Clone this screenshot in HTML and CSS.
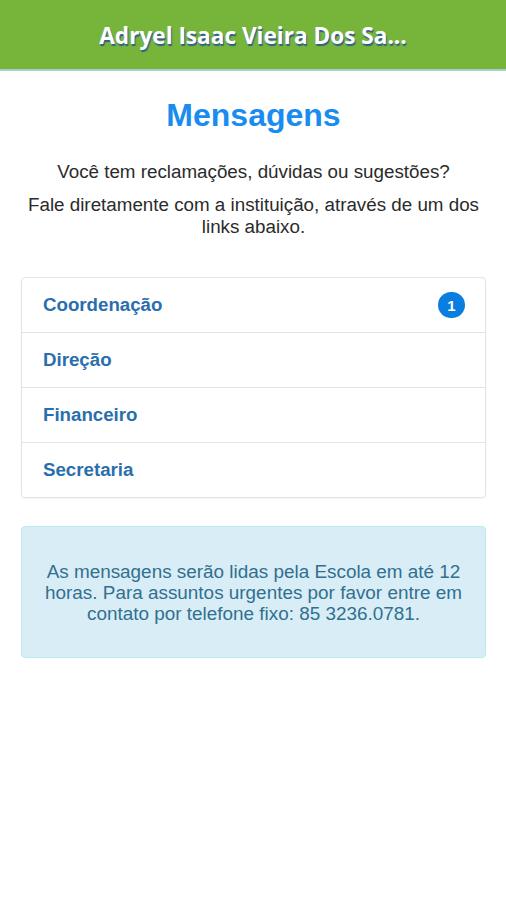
FILE: index.html
```html
<!DOCTYPE html>
<html>
<head>
    <title>Mensagens</title>
    <link rel="stylesheet" href="styles.css">
</head>
<body>
    <div class="top-bar">
        <div class="top-title">Adryel Isaac Vieira Dos Sa...</div>
    </div>
    <div class="content">
        <h1>Mensagens</h1>
        <p class="intro">Você tem reclamações, dúvidas ou sugestões?</p>
        <p class="intro">Fale diretamente com a instituição, através de um dos links abaixo.</p>
        <div class="list-group">
            <a class="list-item" href="#">Coordenação <span class="badge">1</span></a>
            <a class="list-item" href="#">Direção</a>
            <a class="list-item" href="#">Financeiro</a>
            <a class="list-item" href="#">Secretaria</a>
        </div>
        <div class="alert-info">
            As mensagens serão lidas pela Escola em até 12 horas. Para assuntos urgentes por favor entre em contato por telefone fixo: 85 3236.0781.
        </div>
    </div>
</body>
</html>
```

FILE: styles.css
```css
body {
    margin: 0;
    font-family: "Liberation Sans", Arial, sans-serif;
    background-color: #fff;
    color: #2b2b2b;
}
.top-bar {
    height: 69px;
    background-color: #76b53a;
    border-bottom: 2px solid #a9cfc8;
    display: flex;
    align-items: center;
    justify-content: center;
}
.top-title {
    color: #fff;
    font-family: "Open Sans", sans-serif;
    font-weight: bold;
    font-size: 22.6px;
    text-shadow: 1px 2px 1px #2f5d8a;
    white-space: nowrap;
    padding-top: 1px;
}
.content {
    padding: 0 20px 0 21px;
}
h1 {
    color: #1a8cf0;
    font-size: 32px;
    font-weight: bold;
    text-align: center;
    margin: 26px 0 27px;
}
.intro {
    font-size: 18.8px;
    line-height: 22px;
    text-align: center;
    margin: 0 0 11px;
}
.list-group {
    margin-top: 39px;
    border: 1px solid #e4e4e4;
    border-radius: 4px;
    box-shadow: 0 1px 2px rgba(0, 0, 0, 0.05);
}
.list-item {
    display: flex;
    align-items: center;
    justify-content: space-between;
    height: 54px;
    padding: 0 20px 0 21px;
    border-top: 1px solid #e4e4e4;
    color: #2a6eae;
    font-size: 18.7px;
    font-weight: bold;
    text-decoration: none;
}
.list-item:first-child {
    border-top: none;
}
.badge {
    display: flex;
    align-items: center;
    justify-content: center;
    width: 27px;
    height: 26px;
    border-radius: 13px;
    background-color: #0a7ee0;
    color: #fff;
    font-size: 15px;
}
.alert-info {
    margin-top: 28px;
    background-color: #d9edf7;
    border: 1px solid #bce8f1;
    border-radius: 4px;
    color: #31708f;
    font-size: 18.9px;
    line-height: 21px;
    text-align: center;
    padding: 34px 16px 33px;
}
```
